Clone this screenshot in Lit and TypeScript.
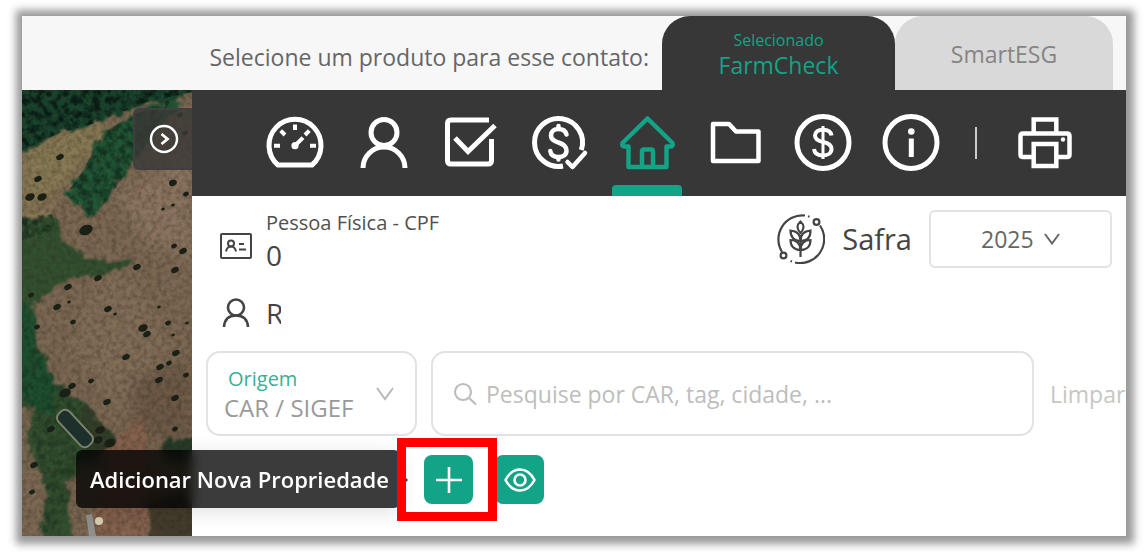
import { LitElement, html, css, svg } from "lit";
import { customElement, state } from "lit/decorators.js";

const ICONS: Record<string, unknown> = {
  gauge: svg`<path d="M15 54A26 26 0 1 1 49 54Z"/><path stroke-width="4" d="M32 13.5V19M11 34.7H17M47 34.7H53M17.7 19.7L22 24M42 24L46.3 19.7M32 34.7L40 26.7"/><circle class="dot" cx="32" cy="34.7" r="3.6"/>`,
  person: svg`<circle cx="33" cy="21.5" r="13"/><path d="M12 57A21 21 0 0 1 54 57"/>`,
  check: svg`<path d="M50 9H12Q8.500 9 8.500 12.500V49.500Q8.500 53 12 53H49Q52.500 53 52.500 49.500V28"/><path d="M16 27L29 40.500L56 14.500"/>`,
  paid: svg`<path d="M54.300 39A24 24 0 1 0 36 55"/><path stroke-width="4.500" stroke-linecap="round" stroke-linejoin="round" d="M40.500 51L45.500 56L58 42"/><path stroke-width="4.500" stroke-linecap="round" d="M39.500 23.500C38.500 19.500 35.500 18 31.500 18C27 18 24 20.500 24 24.500C24 29 28 30.200 31.500 31.500C36 33 39.500 35 39.500 39.500C39.500 43.500 36.500 46 31.500 46C27 46 23.800 44 23.300 40M31.500 15V18M31.500 46V48.500"/>`,
  home: svg`<g stroke-width="4.500" stroke-linejoin="round"><path d="M32.500 7.500L7.500 32Q6.500 35.500 9.500 35.500H13.500V56H51.500V35.500H55.500Q58.500 35.500 57.500 32Z"/><path d="M27 56V40.500Q27 38.500 29 38.500H36Q38 38.500 38 40.500V56"/></g>`,
  folder: svg`<path stroke-width="4.500" stroke-linejoin="round" d="M10 13H26L33 20.500H55.500V50H10Z"/>`,
  dollar: svg`<circle cx="32" cy="31.500" r="26"/><path stroke-width="4" d="M40.500 24.500C40 20.500 36.500 18.700 32 18.700C27 18.700 24 21 24 24.500C24 28.500 27.500 30 32 31C37 32 40.500 34 40.500 38C40.500 42 37 44.500 32 44.500C27 44.500 23.500 42.500 23 38"/><path stroke-width="3" d="M32 15V48"/>`,
  info: svg`<circle cx="32" cy="31.500" r="26"/><circle class="dot" cx="32.300" cy="20.500" r="3.300"/><path d="M32.300 27.500V46"/>`,
  printer: svg`<path stroke-width="4.500" d="M20.700 22V8.500H43.300V22M20.700 46H10Q7.500 46 7.500 43.500V25Q7.500 22.500 10 22.500H54Q56.500 22.500 56.500 25V43.500Q56.500 46 54 46H43.300M20.700 33H43.300V55H20.700Z"/><circle class="dot" cx="50" cy="28.500" r="2.200"/>`,
};

const NAV = [
  ["gauge", "Painel"], ["person", "Contato"], ["check", "Tarefas"], ["paid", "Crédito"],
  ["home", "Propriedades"], ["folder", "Documentos"], ["dollar", "Financeiro"], ["info", "Informações"],
];

const TREES = [
  [151, 93, 4], [164, 104, 3], [141, 119, 2], [151, 115, 2], [152, 156, 3], [161, 161, 4], [153, 180, 4],
  [115, 177, 4], [76, 188, 4], [46, 197, 4], [9, 205, 3], [35, 217, 4], [47, 212, 2], [86, 219, 4],
  [93, 224, 2], [51, 232, 3], [15, 237, 3], [137, 217, 2], [146, 233, 3], [165, 233, 2], [121, 238, 5],
  [125, 244, 4], [151, 245, 2], [154, 263, 4], [104, 267, 4], [138, 277, 4], [147, 273, 3], [64, 140, 7],
  [8, 107, 5], [20, 107, 5], [137, 290, 4], [164, 285, 3], [69, 291, 3], [85, 312, 4], [153, 308, 4],
  [153, 339, 3], [78, 340, 5], [43, 303, 6], [29, 339, 4], [88, 353, 6], [76, 350, 5], [38, 67, 4],
  [16, 89, 4], [163, 43, 3], [158, 25, 3], [150, 92, 3], [12, 375, 4], [10, 402, 3], [50, 296, 4],
];

@customElement("aerial-map")
class AerialMap extends LitElement {
  static styles = css`
    :host { display: block; position: relative; overflow: hidden; background: #75614b; }
    .ground { position: absolute; inset: 0; width: 100%; height: 100%; display: block; }
    filter { color-interpolation-filters: sRGB; }
  `;
  render() {
    return html`<svg class="ground" viewBox="0 0 170 446" preserveAspectRatio="xMidYMid slice" role="img" aria-label="Mapa">
      <defs>
        <filter id="edge" x="-5%" y="-5%" width="110%" height="110%">
          <feTurbulence type="fractalNoise" baseFrequency="0.09" numOctaves="3" seed="4" result="n"/>
          <feDisplacementMap in="SourceGraphic" in2="n" scale="14" xChannelSelector="R" yChannelSelector="G"/>
          <feGaussianBlur stdDeviation="0.8"/>
        </filter>
        <filter id="grain" x="0" y="0" width="100%" height="100%">
          <feTurbulence type="fractalNoise" baseFrequency="0.2" numOctaves="3" seed="9"/>
          <feColorMatrix values="0 0 0 0 0.15  0 0 0 0 0.13  0 0 0 0 0.1  0.7 0 0 0 -0.25"/>
        </filter>
        <filter id="leaves" x="0" y="0" width="100%" height="100%">
          <feTurbulence type="fractalNoise" baseFrequency="0.14" numOctaves="3" seed="2"/>
          <feColorMatrix values="0 0 0 0 0.03  0 0 0 0 0.11  0 0 0 0 0.08  3 0 0 0 -1.15" result="m"/>
          <feComposite in="m" in2="SourceGraphic" operator="in"/>
        </filter>
        <filter id="soft"><feGaussianBlur stdDeviation="0.7"/></filter>
        <filter id="wide"><feGaussianBlur stdDeviation="7"/></filter>
      </defs>
      <rect width="170" height="446" fill="#7c6852"/>
      <g filter="url(#wide)">
        <path d="M0 60L70 28L90 40L40 100L0 125Z" fill="#887a54"/>
        <path d="M95 105L170 60V170L120 150Z" fill="#8b745f"/>
        <path d="M70 190L110 185L150 260L100 320L50 260Z" fill="#826d57"/>
        <path d="M110 290L170 270V360L110 340Z" fill="#6d5946"/>
      </g>
      <g filter="url(#edge)">
        <path d="M-10 -10H180V4L125 14L95 25L70 34L40 42L0 62Z" fill="#18452d"/>
        <path d="M82 42L110 26L150 8L158 18L128 48L108 76L90 104L70 128L44 104L60 82Z" fill="#205836"/>
        <path d="M-10 130L32 124L42 150L64 168L112 172L88 184L50 188L30 198L12 214L16 250L32 290L62 312L78 346L60 372L46 392L50 450H20L24 400L5 350L-10 340Z" fill="#32502f"/>
        <path d="M-10 215L8 212L18 262L34 292L30 330L0 310Z" fill="#1d5230"/>
        <path d="M60 312L92 345L84 365L62 370Z" fill="#303f2a"/>
        <path d="M-10 318L14 316L5 350L8 380L-10 390Z" fill="#75664c"/>
        <path d="M88 350L120 330L132 400L122 450H70L78 400Z" fill="#85624e"/>
        <path d="M124 410L180 400V456H128Z" fill="#453d2c"/>
        <path d="M140 352L180 346V380L144 366Z" fill="#263b28"/>
        <path d="M0 124L26 122L32 110" fill="none" stroke="#8c7b56" stroke-width="3"/>
      </g>
      <g filter="url(#leaves)">
        <path d="M0 0H170V2L125 12L95 24L70 34L40 42L0 60Z"/>
        <path opacity=".6" d="M82 42L110 26L150 8L128 48L108 76L90 104L70 128L44 104L60 82Z"/>
        <path opacity=".6" d="M0 128L30 124L34 140L0 150Z"/>
        <path opacity=".3" d="M0 215L18 262L34 292L60 312L50 400L30 446H20L24 400L0 300Z"/>
      </g>
      <rect width="170" height="446" filter="url(#grain)"/>
      <g filter="url(#soft)">
        ${TREES.map(([x, y, r]) => svg`<ellipse cx=${x} cy=${y} rx=${r} ry=${r * 0.7} transform="rotate(-25 ${x} ${y})" fill="#1a2015"/>`)}
        <rect x="31" y="331" width="44" height="15" rx="6" transform="rotate(47 53 338.500)" fill="#1d302b" stroke="#7b846a" stroke-width="2"/>
        <path d="M64 425L70 424L74 446H67Z" fill="#8f8f8d"/>
        <circle cx="77" cy="431" r="4" fill="#d8cdb2"/>
      </g>
    </svg><slot></slot>`;
  }
}

@customElement("app-root")
class AppRoot extends LitElement {
  @state() private active = "home";

  static styles = css`
    :host {
      display: block; box-sizing: border-box; min-height: 100vh; padding: 16px 22px; background: #fff;
      font-family: "Open Sans", "Noto Sans", sans-serif; color: #444;
    }
    * { box-sizing: border-box; }
    button, select, input { font: inherit; color: inherit; margin: 0; padding: 0; border: 0; background: none; }
    svg { display: block; flex: none; fill: none; stroke: currentColor; }
    .frame {
      display: flex; flex-direction: column; min-height: calc(100vh - 32px); background: #fff;
      box-shadow: 1px 1px 8px 7px #999;
    }
    .products {
      display: flex; justify-content: flex-end; height: 74px; padding-right: 13px; background: #f7f7f7;
    }
    .prompt { margin: 0 13px 0 0; padding-top: 25px; font-size: 23px; line-height: 32px; color: #666; white-space: nowrap; }
    .tab {
      display: flex; flex-direction: column; align-items: center; width: 218px; padding-top: 22px;
      border-radius: 28px 28px 0 0; background: #d9d9d9; color: #858585; font-size: 23px; line-height: 32px;
    }
    .tab.selected { width: 233px; padding-top: 12px; background: #373737; color: #13a386; line-height: 26px; }
    .tab small { font-size: 16px; line-height: 24px; }
    .body { flex: 1; display: grid; grid-template-columns: 170px minmax(0, 1fr); }
    .collapse {
      position: absolute; top: 18px; right: 0; width: 59px; height: 62px; display: grid; place-items: center;
      border-radius: 6px 0 0 6px; background: rgba(58, 56, 54, 0.8); color: #fff;
      border: 2px solid #403f40; border-right: 0;
    }
    .toolbar { display: flex; height: 106px; padding-left: 59px; background: #373737; color: #fff; }
    .tool { position: relative; width: 88px; display: flex; justify-content: center; align-items: flex-start; padding-top: 21px; }
    .tool svg { stroke-width: 5; }
    .dot { fill: currentColor; stroke: none; }
    .tool.active { color: #13a386; }
    .tool.active::after {
      content: ""; position: absolute; bottom: 0; left: 9px; right: 9px; height: 11px;
      border-radius: 4px 4px 0 0; background: #13a386;
    }
    .divider { width: 2px; height: 32px; margin: 37px 24px 0 20px; background: #ccc; }
    .summary { display: flex; justify-content: space-between; align-items: flex-start; padding: 14px 14px 0 28px; }
    .facts { display: grid; grid-template-columns: 32px auto; column-gap: 14px; align-items: center; margin: 0; }
    .facts dt, .facts dd { margin: 0; }
    .kind { font-size: 20px; line-height: 26px; white-space: nowrap; color: #505050; }
    .value { display: block; width: 15px; overflow: hidden; font-size: 28px; line-height: 38px; color: #444; }
    .facts .second { margin-top: 20px; }
    .facts .card { padding-top: 7px; }
    .season { display: flex; align-items: center; gap: 17px; color: #444; }
    .season label { font-size: 29px; line-height: 38px; }
    .picker {
      display: flex; align-items: center; justify-content: center; gap: 10px; width: 183px; height: 58px;
      border: 2px solid #e2e2e2; border-radius: 6px; font-size: 23px; color: #666;
    }
    select { appearance: none; outline: 0; cursor: pointer; }
    .filters { display: flex; align-items: center; padding: 19px 0 0 14px; }
    .origin {
      display: flex; align-items: center; justify-content: space-between; width: 211px; height: 85px;
      padding: 0 21px 0 16px; margin-right: 14px; border: 2px solid #e2e2e2; border-radius: 14px; color: #9a9a9a;
    }
    .field { display: flex; flex-direction: column; align-items: flex-start; }
    .field label { padding-left: 4px; font-size: 20px; line-height: 28px; color: #36b096; }
    .field select { font-size: 24px; line-height: 30px; height: 30px; }
    .search {
      flex: 1; min-width: 0; display: flex; align-items: center; gap: 9px; height: 85px; padding: 0 20px;
      border: 2px solid #e2e2e2; border-radius: 14px; color: #bdbdbd;
    }
    .search input { flex: 1; min-width: 0; outline: 0; font-size: 23px; line-height: 32px; }
    .search input::placeholder { color: #bdbdbd; opacity: 1; }
    .clear { width: 92px; padding-left: 16px; font-size: 23px; line-height: 32px; color: #c6c6c6; text-align: left; }
    .actions { display: flex; gap: 22px; padding: 19px 0 31px 232px; }
    .spot { position: relative; z-index: 1; }
    .action { width: 49px; height: 49px; display: grid; place-items: center; border-radius: 8px; background: #13a386; color: #fff; }
    .highlight { position: absolute; inset: -17px -24px -17px -27px; border: 9px solid #f00; pointer-events: none; }
    .tip {
      position: absolute; right: calc(100% + 24px); top: -5px; padding: 14px 11px 14px 14px; border-radius: 6px;
      background: rgba(0, 0, 0, 0.77); color: #fff; font-size: 22px; line-height: 30px; font-weight: 600;
      white-space: nowrap; box-shadow: 0 4px 20px rgba(0, 0, 0, 0.12); backdrop-filter: blur(6px);
    }
    .tip::after {
      content: ""; position: absolute; left: 100%; top: 22px; border: 8px solid transparent;
      border-right: 0; border-left-color: #3b3b3b;
    }
  `;

  private tool(name: string, label: string) {
    return html`<button class="tool ${this.active === name ? "active" : ""}" aria-label=${label}
      @click=${() => (this.active = name)}><svg width="64" height="64" viewBox="0 0 64 64">${ICONS[name]}</svg></button>`;
  }

  render() {
    return html`<div class="frame">
      <header class="products">
        <p class="prompt">Selecione um produto para esse contato:</p>
        <button class="tab selected"><small>Selecionado</small>FarmCheck</button>
        <button class="tab">SmartESG</button>
      </header>
      <div class="body">
        <aerial-map>
          <button class="collapse" aria-label="Recolher mapa">
            <svg width="30" height="30" viewBox="0 0 30 30" stroke-width="2.400"><circle cx="15" cy="15" r="13"/><path stroke-width="2.800" d="M12.500 10L18.500 15L12.500 20"/></svg>
          </button>
        </aerial-map>
        <main>
          <nav class="toolbar">
            ${NAV.map(([n, l]) => this.tool(n, l))}
            <span class="divider"></span>
            ${this.tool("printer", "Imprimir")}
          </nav>
          <section class="summary">
            <dl class="facts">
              <dt class="card"><svg width="32" height="26" viewBox="0 0 32 26" stroke-width="2"><rect x="1" y="1" width="30" height="24" rx="1"/><circle cx="11" cy="10.500" r="3"/><path d="M6 18.500Q7 13.500 11 13.500T16 18.500M19 11H24M19 16.500H26"/></svg></dt>
              <dd><span class="kind">Pessoa Física - CPF</span><span class="value">0</span></dd>
              <dt class="second"><svg width="32" height="30" viewBox="0 0 32 30" stroke-width="2.600"><circle cx="16" cy="9.500" r="8"/><path d="M4 29C4.500 21 9.500 17.500 16 17.500S27.500 21 28 29"/></svg></dt>
              <dd class="second"><span class="value">R</span></dd>
            </dl>
            <div class="season">
              <svg width="50" height="50" viewBox="0 0 50 50" stroke-width="2.200">
                <path d="M30 1.500A24 24 0 0 0 7 38M45 11.500A24 24 0 0 1 20 48.500M33 2.300L34.500 2.800M17 47.500L15.500 47"/>
                <circle cx="41.500" cy="8" r="2.900"/><circle cx="8.500" cy="41.500" r="2.900"/>
                <path d="M25.500 7.500C29.500 11 29.500 15 25.500 19C21.500 15 21.500 11 25.500 7.500ZM25.500 27C19 27 15.500 23 15.500 16.500C21 17 25.500 20 25.500 27C25.500 20 30 17 35.500 16.500C35.500 23 32 27 25.500 27ZM25.500 36C19 36 15.500 32 15.500 26C21 26 25.500 29 25.500 36C25.500 29 30 26 35.500 26C35.500 32 32 36 25.500 36ZM25.500 27V43"/>
              </svg>
              <label for="season">Safra</label>
              <div class="picker">
                <select id="season"><option>2025</option></select>
                <svg width="16" height="12" viewBox="0 0 16 12" stroke-width="2"><path d="M1 1L8 10.500L15 1"/></svg>
              </div>
            </div>
          </section>
          <section class="filters">
            <div class="origin">
              <div class="field">
                <label for="origin">Origem</label>
                <select id="origin"><option>CAR / SIGEF</option></select>
              </div>
              <svg width="18" height="14" viewBox="0 0 18 14" stroke-width="2" color="#b8b8b8"><path d="M1 1L9 12L17 1"/></svg>
            </div>
            <div class="search">
              <svg width="24" height="24" viewBox="0 0 24 24" stroke-width="2.200"><circle cx="10" cy="10" r="8"/><path d="M15.500 15.500L23 22.500"/></svg>
              <input aria-label="Pesquisar" placeholder="Pesquise por CAR, tag, cidade, ..." />
            </div>
            <button class="clear">Limpar</button>
          </section>
          <section class="actions">
            <div class="spot">
              <button class="action" aria-labelledby="tip"><svg width="26" height="26" viewBox="0 0 26 26" stroke-width="2.600"><path d="M13 0V26M0 13H26"/></svg></button>
              <div class="tip" id="tip" role="tooltip">Adicionar Nova Propriedade</div>
              <span class="highlight"></span>
            </div>
            <button class="action" aria-label="Visualizar"><svg width="32" height="24" viewBox="0 0 32 24" stroke-width="2.600"><path d="M1.500 12Q7 1.500 16 1.500T30.500 12Q25 22.500 16 22.500T1.500 12Z"/><circle cx="16" cy="12" r="5.500"/></svg></button>
          </section>
        </main>
      </div>
    </div>`;
  }
}
